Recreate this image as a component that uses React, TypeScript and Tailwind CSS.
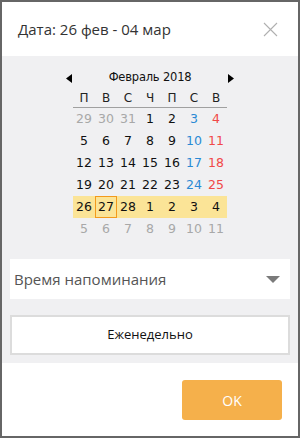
import React from "react";

type Day = { n: number; c: "o" | "n" | "s" | "u" };

const rows: Day[][] = [
  [
    { n: 29, c: "o" }, { n: 30, c: "o" }, { n: 31, c: "o" }, { n: 1, c: "n" }, { n: 2, c: "n" }, { n: 3, c: "s" }, { n: 4, c: "u" },
  ],
  [
    { n: 5, c: "n" }, { n: 6, c: "n" }, { n: 7, c: "n" }, { n: 8, c: "n" }, { n: 9, c: "n" }, { n: 10, c: "s" }, { n: 11, c: "u" },
  ],
  [
    { n: 12, c: "n" }, { n: 13, c: "n" }, { n: 14, c: "n" }, { n: 15, c: "n" }, { n: 16, c: "n" }, { n: 17, c: "s" }, { n: 18, c: "u" },
  ],
  [
    { n: 19, c: "n" }, { n: 20, c: "n" }, { n: 21, c: "n" }, { n: 22, c: "n" }, { n: 23, c: "n" }, { n: 24, c: "s" }, { n: 25, c: "u" },
  ],
  [
    { n: 26, c: "n" }, { n: 27, c: "n" }, { n: 28, c: "n" }, { n: 1, c: "n" }, { n: 2, c: "n" }, { n: 3, c: "n" }, { n: 4, c: "n" },
  ],
  [
    { n: 5, c: "o" }, { n: 6, c: "o" }, { n: 7, c: "o" }, { n: 8, c: "o" }, { n: 9, c: "o" }, { n: 10, c: "o" }, { n: 11, c: "o" },
  ],
];

const colorClass = {
  o: "text-[#a8a8a8]",
  n: "text-[#111]",
  s: "text-[#2a8ad4]",
  u: "text-[#f04848]",
};

const weekdays = ["П", "В", "С", "Ч", "П", "С", "В"];

export default function App() {
  return (
    <div className="w-[300px] h-[438px] border-2 border-[#666] bg-white flex flex-col font-['Open_Sans','Noto_Sans',sans-serif]">
      <div className="h-[54px] flex items-center justify-between pl-[16px] pr-[20px] shrink-0">
        <span className="text-[15px] text-[#333]">Дата: 26 фев - 04 мар</span>
        <svg width="15" height="15" viewBox="0 0 15 15" className="mt-[1px]">
          <path d="M1 1 L14 14 M14 1 L1 14" stroke="#b0b0b0" strokeWidth="1.1" />
        </svg>
      </div>
      <div className="h-[307px] bg-[#f0f0f2] flex flex-col shrink-0">
        <div className="flex flex-col items-center pt-[14px] font-['DejaVu_Sans',sans-serif] text-[12px]">
          <div className="w-[168px] h-[16px] flex items-center justify-between">
            <svg width="6" height="9" viewBox="0 0 6 9"><path d="M6 0 L0 4.5 L6 9 Z" fill="#000" /></svg>
            <span className="text-[#111] leading-none text-[11.5px] tracking-[-0.2px]">Февраль 2018</span>
            <svg width="6" height="9" viewBox="0 0 6 9"><path d="M0 0 L6 4.5 L0 9 Z" fill="#000" /></svg>
          </div>
          <div className="w-[154px] flex h-[20px] items-center mt-[2px] border-b border-[#a0a0a0]">
            {weekdays.map((w, i) => (
              <div key={i} className="w-[22px] text-center text-[#222] leading-none">{w}</div>
            ))}
          </div>
          <div className="flex flex-col w-[154px]">
            {rows.map((r, ri) => (
              <div key={ri} className={`flex h-[22px] ${ri === 4 ? "bg-[#fbe497]" : ""}`}>
                {r.map((d, di) => (
                  <div
                    key={di}
                    className={`w-[22px] h-[22px] flex items-center justify-center text-[12.5px] ${colorClass[d.c]} ${ri === 4 && di === 1 ? "border border-[#f39a1c]" : ""}`}
                  >
                    {d.n}
                  </div>
                ))}
              </div>
            ))}
          </div>
        </div>
        <div className="mx-[8px] mt-[19px] h-[40px] bg-white flex items-center justify-between pl-[4px] pr-[10px]">
          <span className="text-[15px] text-[#555]">Время напоминания</span>
          <svg width="14" height="7" viewBox="0 0 14 7"><path d="M0 0 L14 0 L7 7 Z" fill="#7a7a7a" /></svg>
        </div>
        <div className="mx-[8px] mt-[16px] h-[40px] bg-white border-2 border-[#dcdcdc] flex items-center justify-center">
          <span className="text-[13px] text-[#111]">Еженедельно</span>
        </div>
      </div>
      <div className="flex-1 flex justify-end pr-[16px] pt-[17px]">
        <div className="w-[100px] h-[40px] bg-[#f5b04b] rounded-[3px] flex items-center justify-center text-white text-[14px]">OK</div>
      </div>
    </div>
  );
}
